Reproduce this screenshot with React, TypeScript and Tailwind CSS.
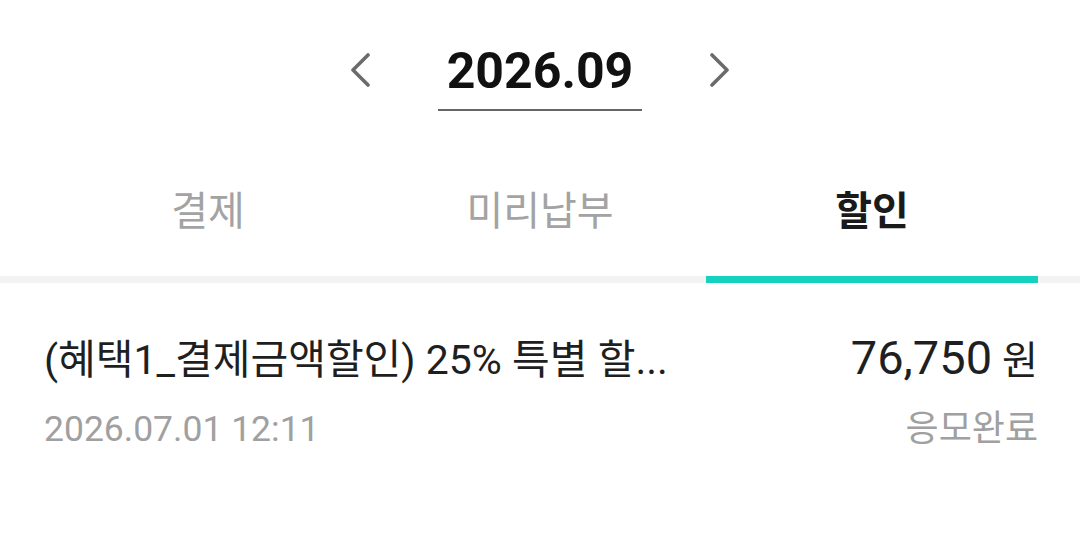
import { useState } from 'react';

const tabs = ['결제', '미리납부', '할인'];

const discounts = [
  {
    id: 1,
    title: '(혜택1_결제금액할인) 25% 특별 할...',
    amount: '76,750',
    date: '2026.07.01 12:11',
    status: '응모완료',
  },
];

function Chevron({ dir }: { dir: 'left' | 'right' }) {
  return (
    <svg width="20" height="34" viewBox="0 0 20 34" fill="none" className="mt-[7px]">
      <path
        d={dir === 'left' ? 'M18 2 L3 17 L18 32' : 'M2 2 L17 17 L2 32'}
        stroke="#6b6b6b"
        strokeWidth="3.6"
        strokeLinecap="round"
        strokeLinejoin="round"
      />
    </svg>
  );
}

export default function App() {
  const [active, setActive] = useState(2);

  return (
    <div className="w-[1080px] h-[543px] bg-white font-['Roboto','Noto_Sans_CJK_KR',sans-serif] overflow-hidden">
      {/* month picker */}
      <div className="flex justify-center items-start gap-[68px] pt-[46px]">
        <Chevron dir="left" />
        <div className="w-[204px] flex flex-col items-center">
          <span className="text-[50px] leading-[50px] font-bold text-[#111]">2026.09</span>
          <div className="mt-[13px] w-full h-[2px] bg-[#666]" />
        </div>
        <Chevron dir="right" />
      </div>

      {/* tabs */}
      <div className="flex px-[42px] border-b-[7px] border-[#f3f3f3]">
        {tabs.map((t, i) => (
          <button
            key={t}
            onClick={() => setActive(i)}
            className={`flex-1 pt-[81px] pb-[44px] -mb-[7px] border-b-[7px] text-[40px] leading-[40px] ${
              i === active
                ? 'border-[#14d2be] font-bold text-[#1a1a1a]'
                : 'border-transparent text-[#a3a3a3]'
            }`}
          >
            {t}
          </button>
        ))}
      </div>

      {/* discount list */}
      <div className="pl-[44px] pr-[42px] pt-[55px]">
        {discounts.map((d) => (
          <div key={d.id}>
            <div className="flex items-baseline justify-between gap-6">
              <span className="whitespace-nowrap text-[41px] leading-[40px] text-[#1f1f1f]">
                {d.title}
              </span>
              <span className="flex items-baseline text-[#1f1f1f]">
                <span className="text-[47px] leading-[40px]">{d.amount}</span>
                <span className="ml-[10px] text-[39px] leading-[40px]">원</span>
              </span>
            </div>
            <div className="mt-[30px] flex items-baseline justify-between">
              <span className="text-[35.5px] leading-[36px] text-[#a0a0a0]">{d.date}</span>
              <span className="text-[36px] leading-[36px] text-[#a0a0a0]">{d.status}</span>
            </div>
          </div>
        ))}
      </div>
    </div>
  );
}
